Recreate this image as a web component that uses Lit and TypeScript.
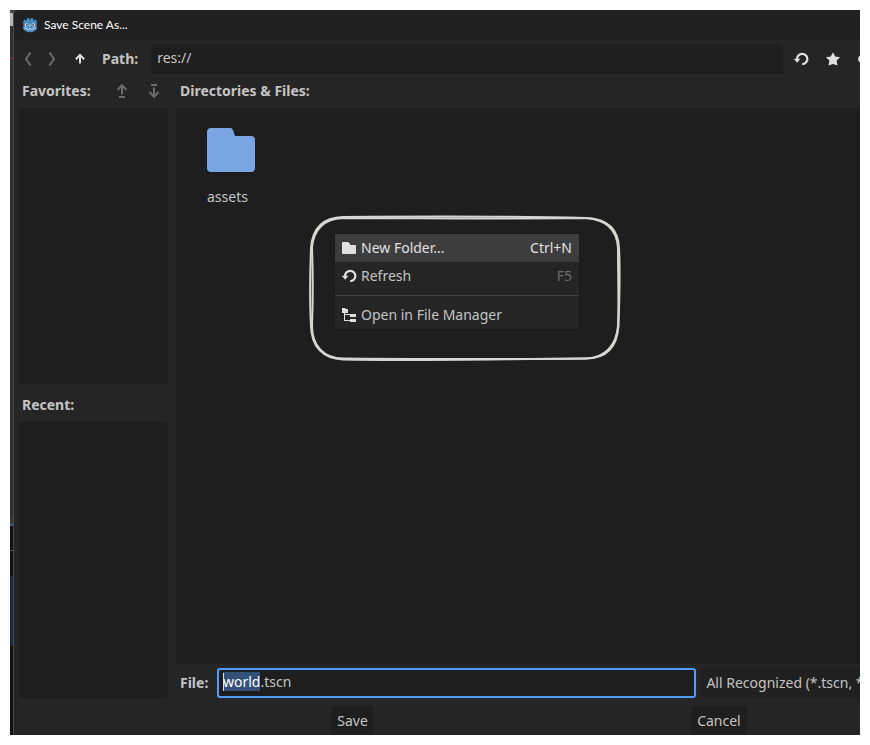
import { LitElement, html, css, svg } from "lit";
import { customElement, query } from "lit/decorators.js";

const refreshIcon = svg`<path d="M4 8.600A5.200 5.200 0 1 1 9.200 13.200" fill="none" stroke="currentColor" stroke-width="2.200"/><path d="M.8 7.800h6.600L4.100 11.800z" fill="currentColor"/>`;

@customElement("app-root")
export class AppRoot extends LitElement {
  @query("#file") fileInput!: HTMLInputElement;

  static styles = css`
    :host {
      display: block;
      box-sizing: border-box;
      height: 100vh;
      padding: 10px;
      background: #fff;
      color: #c4c4c4;
      font: 14px/20px "Noto Sans", "Open Sans", sans-serif;
    }
    * { box-sizing: border-box; }
    svg { display: block; }
    button, input, select {
      font: inherit;
      color: inherit;
      border: 0;
      margin: 0;
      padding: 0;
      background: none;
      outline: none;
      appearance: none;
    }
    .frame {
      display: flex;
      height: 100%;
      overflow: hidden;
      background: #303030;
    }
    .behind {
      flex: none;
      display: flex;
      flex-direction: column;
      width: 4px;
      overflow: hidden;
      background: #111;
      border-right: 1px solid #4a4a4a;
    }
    .behind i { flex: none; }
    .knob { height: 16px; background: #b4b4b4; border-top: 3px solid #444; }
    .tab { height: 32px; background: #303030; }
    .axis { height: 1px; background: #a02437; }
    .dock { height: 459px; background: #303030; }
    .edge { height: 6px; background: #3a3a3a; }
    .accent { height: 2px; background: #3d5b8c; }
    .void { height: 24px; background: #111; }
    .rule { height: 1px; background: #555; }
    .picked { margin-top: 25px; height: 70px; background: #1a2a40; }
    .dialog {
      flex: 1 0 auto;
      width: 0;
      margin-right: -204px;
      display: flex;
      flex-direction: column;
      min-width: 0;
      background: #252525;
      border-top-left-radius: 6px;
      overflow: hidden;
    }
    .title {
      flex: none;
      display: flex;
      align-items: center;
      gap: 6px;
      height: 30px;
      padding-left: 8px;
      background: #212121;
      color: #fff;
      font: 12px/16px Lato, "Open Sans", sans-serif;
    }
    .toolbar {
      flex: none;
      display: flex;
      align-items: center;
      height: 34px;
      padding: 4px 0 0 2px;
    }
    .tool {
      width: 24px;
      height: 24px;
      display: grid;
      place-items: center;
    }
    .tool.wide { width: 32px; }
    .dim { color: #6b6b6b; }
    .lit { color: #e0e0e0; }
    .nav { display: flex; width: 86px; }
    .label { font-weight: 700; }
    .path {
      flex: 1;
      min-width: 0;
      height: 30px;
      margin-left: 13px;
      padding: 0 6px 2px;
      background: #1e1e1e;
      border-bottom: 2px solid #1a1a1a;
      border-radius: 3px 3px 0 0;
    }
    .actions { flex: none; display: flex; width: 281px; padding-left: 2px; }
    .body {
      flex: 1;
      min-height: 0;
      display: flex;
      gap: 8px;
      padding: 0 4px;
    }
    .side { flex: none; width: 150px; display: flex; flex-direction: column; }
    .main { flex: 1; min-width: 0; display: flex; flex-direction: column; }
    .head {
      flex: none;
      display: flex;
      align-items: center;
      gap: 4px;
      height: 34px;
      padding-left: 4px;
    }
    .head .tool { width: 28px; }
    .head.low { height: 38px; padding-top: 4px; }
    .head .label { flex: 1; }
    .list { flex: 1; min-height: 0; background: #1e1e1e; border-radius: 3px; }
    .files { position: relative; padding: 20px 31px; }
    .entry { display: grid; gap: 15px; justify-items: start; }
    .filerow {
      flex: none;
      display: flex;
      align-items: center;
      gap: 4px;
      height: 34px;
      padding: 4px 0 0 4px;
    }
    .filerow .label { width: 33px; }
    .fields {
      flex: 1;
      display: grid;
      grid-template-columns: 4fr 3fr;
      gap: 4px;
    }
    .name { position: relative; }
    .name input {
      display: block;
      width: 100%;
      height: 30px;
      padding: 0 4px 3px;
      background: #1e1e1e;
      border: 2px solid #539bff;
      border-radius: 3px;
    }
    .name input::selection { background: #335078; color: #fff; }
    .caret {
      position: absolute;
      left: 6px;
      top: 5px;
      width: 1px;
      height: 18px;
      background: #e0e0e0;
    }
    .filter {
      min-width: 0;
      height: 30px;
      padding: 0 6px;
      background: #202020;
      border-radius: 3px;
    }
    .footer {
      flex: none;
      display: flex;
      justify-content: space-evenly;
      height: 37px;
      padding-top: 8px;
    }
    .footer button {
      height: 30px;
      padding: 0 6px;
      background: #1e1e1e;
      border-radius: 3px;
    }
    .ring { position: absolute; left: 133px; top: 106px; }
    .menu {
      position: absolute;
      left: 158px;
      top: 125px;
      width: 246px;
      margin: 0;
      padding: 0;
      border: 1px solid #1a1a1a;
      background: #252525;
    }
    .item {
      display: flex;
      align-items: center;
      gap: 4px;
      width: 100%;
      height: 28px;
      padding: 0 7px 0 6px;
      text-align: left;
    }
    .item .text { flex: 1; }
    .item .key { color: #6b6b6b; }
    .item svg { color: #e0e0e0; }
    .item.hot, .item.hot .key { background: #3d3d3d; color: #e0e0e0; }
    .menu hr { height: 1px; margin: 5px 0; border: 0; background: #424242; }
  `;

  firstUpdated() {
    this.fileInput.focus();
    this.fileInput.setSelectionRange(0, 5, "backward");
  }

  render() {
    return html`
      <div class="frame">
        <div class="behind" aria-hidden="true">
          <i class="knob"></i><i class="tab"></i><i class="axis"></i><i class="dock"></i>
          <i class="edge"></i><i class="accent"></i><i class="void"></i><i class="rule"></i><i class="picked"></i>
        </div>
        <div class="dialog" role="dialog" aria-label="Save Scene As">
          <div class="title">
            <svg width="16" height="16" viewBox="0 0 16 16">
              <path d="M1 5 2.300 2.600l2.200 1L5 1l2 .1.500 1.600h1L9 1.100 11 1l.5 2.600 2.200-1L15 5l-.4 2v5c-.6 2-3.400 3.200-6.600 3.200S2 14 1.400 12V7z" fill="#478cbf"/>
              <circle cx="4.600" cy="8" r="1.800" fill="#dfe9f1"/><circle cx="11.400" cy="8" r="1.800" fill="#dfe9f1"/>
              <circle cx="4.800" cy="8.100" r="1" fill="#414042"/><circle cx="11.200" cy="8.100" r="1" fill="#414042"/>
              <path d="M8 7.600v2M1.500 11l3.400.4.4 1.300h1.500l.3-1h1.800l.3 1h1.500l.4-1.300 3.400-.4" fill="none" stroke="#dfe9f1" stroke-width=".9"/>
            </svg>
            Save Scene As...
          </div>

          <div class="toolbar">
            <div class="nav">
              <button class="tool dim" aria-label="Back"><svg width="16" height="16" viewBox="0 0 16 16"><path d="M10.500 1.500 6 8l4.500 6.500" fill="none" stroke="currentColor" stroke-width="2"/></svg></button>
              <button class="tool dim" aria-label="Forward"><svg width="16" height="16" viewBox="0 0 16 16"><path d="M5.500 1.500 10 8l-4.500 6.500" fill="none" stroke="currentColor" stroke-width="2"/></svg></button>
              <button class="tool wide lit" aria-label="Up"><svg width="16" height="16" viewBox="0 0 16 16"><path d="M8 12.500V4.500M3.800 8.200 8 4l4.200 4.200" fill="none" stroke="currentColor" stroke-width="2"/></svg></button>
            </div>
            <label class="label" for="path">Path:</label>
            <input class="path" id="path" value="res://" />
            <div class="actions">
              <button class="tool wide lit" aria-label="Refresh"><svg width="16" height="16" viewBox="0 0 16 16">${refreshIcon}</svg></button>
              <button class="tool wide lit" aria-label="Favorite"><svg width="16" height="16" viewBox="0 0 16 16"><path d="m8 1.200 2.200 4.300 4.900.7-3.500 3.400.9 5L8 12.900l-4.500 1.700.9-5L.9 6.200l4.900-.7z" fill="currentColor"/></svg></button>
              <button class="tool wide lit" aria-label="Show hidden files"><svg width="16" height="16" viewBox="0 0 16 16"><ellipse cx="8" cy="8" rx="7" ry="5" fill="currentColor"/><circle cx="8" cy="8" r="3" fill="#252525"/></svg></button>
            </div>
          </div>

          <div class="body">
            <div class="side">
              <div class="head">
                <span class="label">Favorites:</span>
                <button class="tool dim" aria-label="Move up"><svg width="16" height="16" viewBox="0 0 16 16"><path d="M8 11.500V2.500M3.500 7 8 2.300 12.500 7M5 14h6" fill="none" stroke="currentColor" stroke-width="2"/></svg></button>
                <button class="tool dim" aria-label="Move down"><svg width="16" height="16" viewBox="0 0 16 16"><path d="M8 4.500v9M3.500 9 8 13.700 12.500 9M5 2h6" fill="none" stroke="currentColor" stroke-width="2"/></svg></button>
              </div>
              <div class="list"></div>
              <div class="head low"><span class="label">Recent:</span></div>
              <div class="list"></div>
            </div>

            <div class="main">
              <div class="head"><span class="label">Directories &amp; Files:</span></div>
              <div class="list files">
                <div class="entry">
                  <svg width="48" height="44" viewBox="0 0 48 44"><path d="M4 0h19c1.500 0 2.400.8 3 2l2 6h16a4 4 0 0 1 4 4v28a4 4 0 0 1-4 4H4a4 4 0 0 1-4-4V4a4 4 0 0 1 4-4z" fill="#79a5e2"/></svg>
                  <span>assets</span>
                </div>
                <svg class="ring" width="312" height="148" viewBox="0 0 312 148" fill="none" stroke="#d6d6d2" stroke-width="2">
                  <path d="M34 3C100 2.500 200 2 277 4C300 4.500 309.500 17 310 34C311.500 65 310 90 309.500 112C308 134 297 144.500 277 144.500C190 145 110 147 34 145.500C13 144.500 2.500 132 2 112C.5 85 1 60 2 34C3.500 14 14 3.500 34 3z"/>
                  <path d="M34 4C110 4 190 5 277 4C297 5.500 308 16 309 34C309 60 310 85 309 112C307 132 296 144 277 144.500C200 145.500 100 145 34 144.500C15 144.500 3 132 3 112C4 85 4 60 3 34C4 16 15 4.500 34 4z"/>
                </svg>
                <div class="menu" role="menu">
                  <button class="item hot" role="menuitem">
                    <svg width="16" height="16" viewBox="0 0 16 16"><path d="M2 2h5.500L9.500 5H14a1 1 0 0 1 1 1v7a1 1 0 0 1-1 1H2a1 1 0 0 1-1-1V3a1 1 0 0 1 1-1z" fill="currentColor"/></svg>
                    <span class="text">New Folder...</span><span class="key">Ctrl+N</span>
                  </button>
                  <button class="item" role="menuitem">
                    <svg width="16" height="16" viewBox="0 0 16 16">${refreshIcon}</svg>
                    <span class="text">Refresh</span><span class="key">F5</span>
                  </button>
                  <hr />
                  <button class="item" role="menuitem">
                    <svg width="16" height="16" viewBox="0 0 16 16" fill="currentColor"><path d="M1 1h3l1 1h2v4H4v1h5V7h6v3H9V8H4v5h5v-1h6v3H9v-1H3V6H1z"/></svg>
                    <span class="text">Open in File Manager</span>
                  </button>
                </div>
              </div>
              <div class="filerow">
                <label class="label" for="file">File:</label>
                <div class="fields">
                  <div class="name"><input id="file" value="world.tscn" /><i class="caret"></i></div>
                  <select class="filter" aria-label="File type"><option>All Recognized (*.tscn, *.scn, *.res)</option></select>
                </div>
              </div>
            </div>
          </div>

          <div class="footer"><button>Save</button><button>Cancel</button></div>
        </div>
      </div>
    `;
  }
}
